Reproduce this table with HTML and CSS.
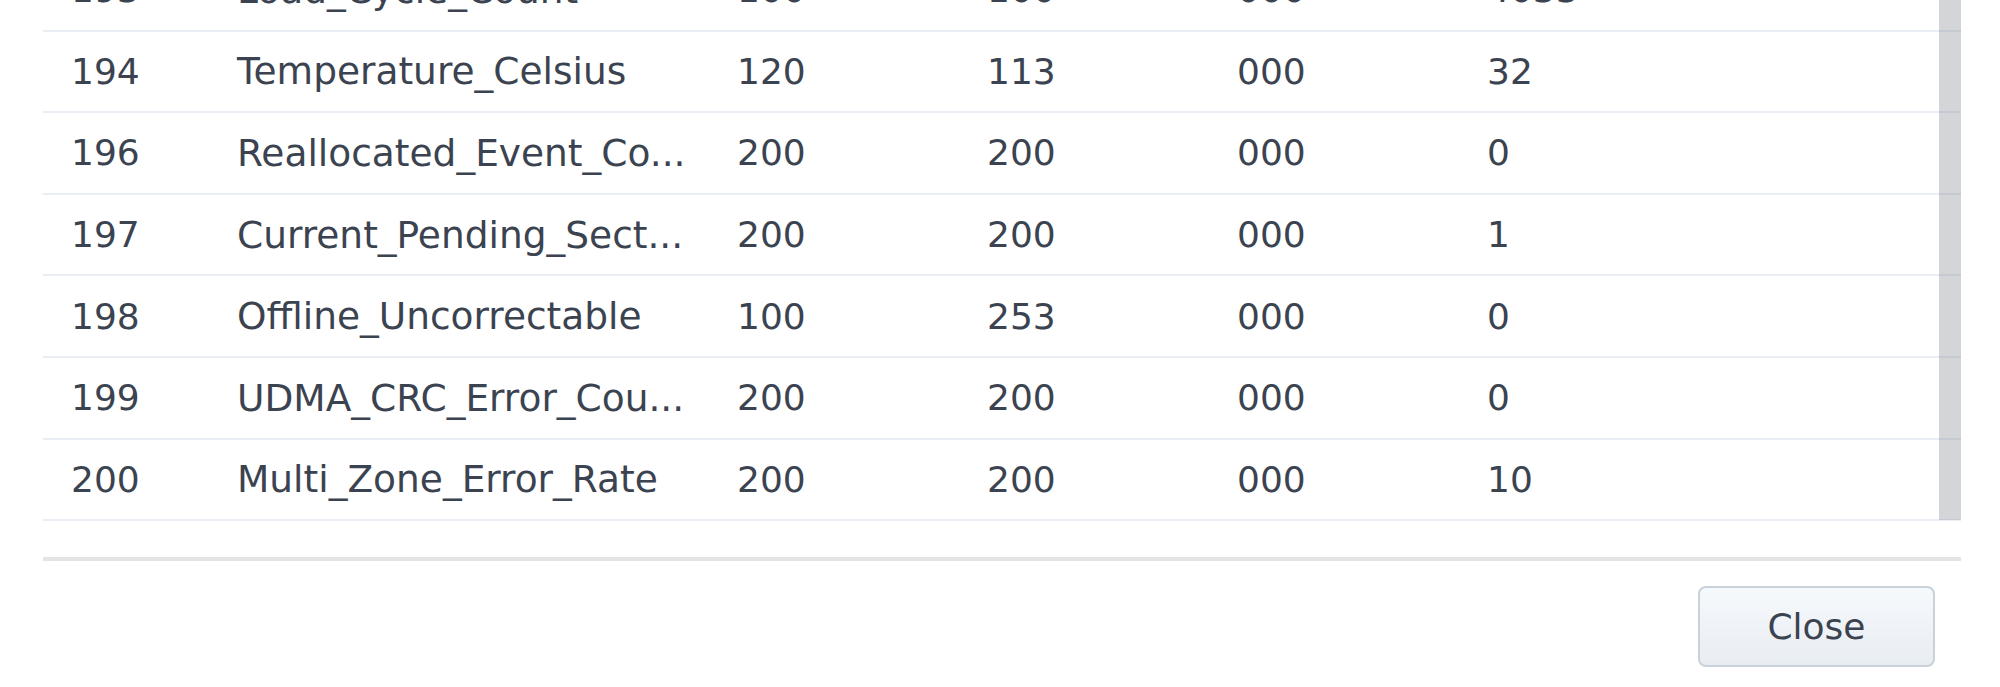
FILE: index.html
```html
<!DOCTYPE html>
<html lang="en">
<head>
<title>S.M.A.R.T. Info</title>
<link rel="stylesheet" href="styles.css">
</head>
<body>
<div id="dialog">
	<div id="grid">
		<div class="rows">
			<div class="row"><span>193</span><span class="name">Load_Cycle_Count</span><span>100</span><span>100</span><span>000</span><span>4033</span></div>
			<div class="row"><span>194</span><span class="name">Temperature_Celsius</span><span>120</span><span>113</span><span>000</span><span>32</span></div>
			<div class="row"><span>196</span><span class="name" title="Reallocated_Event_Count">Reallocated_Event_Co...</span><span>200</span><span>200</span><span>000</span><span>0</span></div>
			<div class="row"><span>197</span><span class="name" title="Current_Pending_Sector">Current_Pending_Sect...</span><span>200</span><span>200</span><span>000</span><span>1</span></div>
			<div class="row"><span>198</span><span class="name">Offline_Uncorrectable</span><span>100</span><span>253</span><span>000</span><span>0</span></div>
			<div class="row"><span>199</span><span class="name" title="UDMA_CRC_Error_Count">UDMA_CRC_Error_Cou...</span><span>200</span><span>200</span><span>000</span><span>0</span></div>
			<div class="row"><span>200</span><span class="name">Multi_Zone_Error_Rate</span><span>200</span><span>200</span><span>000</span><span>10</span></div>
		</div>
		<div class="thumb"></div>
	</div>
	<div id="footer">
		<button class="btn">Close</button>
	</div>
</div>
</body>
</html>
```

FILE: styles.css
```css
* {
	margin: 0;
	padding: 0;
	box-sizing: border-box;
	}
body{
	background-color:#fff;
	font-family:"DejaVu Sans",Verdana,sans-serif;
	font-size:36px;
	color:#3b4350;
	}
#dialog{
	padding:0 39px 0 43px;
	}
#grid{
	position:relative;
	height:522px;
	overflow:hidden;
	}
.rows{
	margin-top:-50px;
	}
.row{
	display:grid;
	grid-template-columns:162px 500px 250px 250px 250px 1fr;
	align-items:center;
	height:81.6px;
	border-bottom:2px solid #e9eef5;
	}
.row span{
	padding:0 10px 0 32px;
	white-space:nowrap;
	overflow:hidden;
	}
.row span:first-child{
	padding-left:28px;
	}
.row .name{
	font-size:37.5px;
	}
.thumb{
	position:absolute;
	top:0;
	right:0;
	width:22px;
	height:520px;
	background-color:rgba(120,124,134,0.32);
	}
#footer{
	margin-top:35px;
	border-top:4px solid #e4e4e4;
	display:flex;
	justify-content:flex-end;
	padding:25px 26px 0 0;
	}
.btn{
	width:237px;
	height:81px;
	border:2px solid #c9d1db;
	border-radius:8px;
	background:linear-gradient(#f6f9fc,#e8edf3);
	font-family:inherit;
	font-size:36px;
	color:#3b4350;
	}
```
